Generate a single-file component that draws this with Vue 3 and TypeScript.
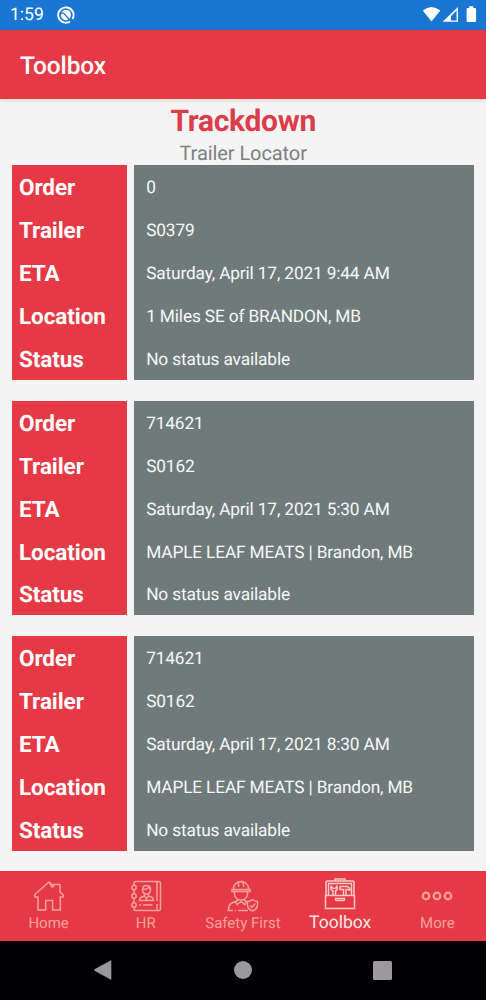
<script setup lang="ts">
interface Trailer {
  order: string
  trailer: string
  eta: string
  location: string
  status: string
}

const labels = ['Order', 'Trailer', 'ETA', 'Location', 'Status']

const trailers: Trailer[] = [
  { order: '0', trailer: 'S0379', eta: 'Saturday, April 17, 2021 9:44 AM', location: '1 Miles SE of BRANDON, MB', status: 'No status available' },
  { order: '714621', trailer: 'S0162', eta: 'Saturday, April 17, 2021 5:30 AM', location: 'MAPLE LEAF MEATS | Brandon, MB', status: 'No status available' },
  { order: '714621', trailer: 'S0162', eta: 'Saturday, April 17, 2021 8:30 AM', location: 'MAPLE LEAF MEATS | Brandon, MB', status: 'No status available' },
]
</script>

<template>
  <div class="screen">
    <div class="status-bar">
      <span class="clock">1:59</span>
      <svg class="app-mark" width="18" height="18" viewBox="0 0 18 18" fill="none" stroke="#fff">
        <path d="M13.100 15.500A7.700 7.700 0 1 1 15.500 13" stroke-width="1.900" />
        <path d="M4.400 6.800A5 5 0 0 1 13.900 9.500Q13.600 11.300 12.400 12.700L8.300 7.900Q6.200 6 4.400 6.800Z" fill="#fff" stroke="none" />
        <path d="M4 8.200Q5.600 6.900 7.500 9L11.300 13.500A5 5 0 0 1 4 8.200Z" fill="#fff" stroke="none" />
      </svg>
      <svg class="signals" width="56" height="18" viewBox="0 0 56 18" fill="#fff">
        <path d="M.8 4.5Q9.500-2.500 18.300 4.500L9.500 15.500Z" />
        <path d="M36 1V15.800H20.500ZM34.600 4.400L28.900 10.200V14.500H34.600Z" fill-rule="evenodd" />
        <path d="M47.200 1.900V.3H51.300V1.900H53Q54.100 1.900 54.100 3V14.800Q54.100 16 53 16H45.700Q44.600 16 44.600 14.800V3Q44.600 1.900 45.700 1.900Z" />
      </svg>
    </div>
    <header class="app-bar">Toolbox</header>
    <main class="content">
      <h1>Trackdown</h1>
      <h2>Trailer Locator</h2>
      <section v-for="(item, index) in trailers" :key="index" class="card">
        <div class="labels">
          <div v-for="label in labels" :key="label" class="cell">{{ label }}</div>
        </div>
        <div class="values">
          <div class="cell">{{ item.order }}</div>
          <div class="cell">{{ item.trailer }}</div>
          <div class="cell">{{ item.eta }}</div>
          <div class="cell">{{ item.location }}</div>
          <div class="cell">{{ item.status }}</div>
        </div>
      </section>
    </main>
    <nav class="tabs">
      <div class="tab">
        <svg width="32" height="32" viewBox="0 0 32 32">
          <path d="M5 17H2V14.300L16 2 20.700 6V4.500H27V12L30.200 14.900V17H27.300V30H19.600V20.500H12.700V30H5ZM16 2L18.800 7 20.700 6" />
        </svg>
        <span>Home</span>
      </div>
      <div class="tab">
        <svg width="32" height="32" viewBox="0 0 32 32">
          <path d="M4 5V3.500Q4 1.500 6 1.500H28.500Q30.500 1.500 30.500 3.500V28.500Q30.500 30.500 28.500 30.500H6Q4 30.500 4 28.500V27.500M4 10V13.500M4 18.500V22.500M27 2V21M27 24V30M9 25H11M13 25H22.500" />
          <circle cx="4" cy="7.500" r="2.200" /><circle cx="4" cy="16" r="2.200" /><circle cx="4" cy="25" r="2.200" />
          <path d="M12.500 9.500Q12.500 5.500 16.500 5.500T20.500 9.500Q20.500 14 16.500 14T12.500 9.500ZM12.700 9Q16 10 18.500 7.500L20.500 9.500M14.500 13.500V16L10.500 17.500 9.500 20.500H23.500L22.500 17.500 18.500 16V13.500M14.500 16L16.500 18.500 18.500 16M16.500 18.500V20.500" />
        </svg>
        <span>HR</span>
      </div>
      <div class="tab">
        <svg width="32" height="32" viewBox="0 0 32 32">
          <path d="M6.500 9.500V8.500A7.500 7 0 0 1 21.500 8.500V9.500M5 9.500H23V11.500H5ZM11.500 2.200V7M16.500 2.200V7M11.500 2H16.500M7.500 12V14A6.500 6 0 0 0 20.500 14V12M10.500 18.500V20.500L4 23.500Q1.500 25 1.500 30.500H6M8 30.500H9M11 30.500H21M17.500 18.500V20.500L21 22M8.500 21.500L10 24.500 14 21.500 18 24.500 19.500 21.500" />
          <path d="M25.500 19.500Q28 21.500 30.500 21.500V25Q30.500 29 25.500 31 20.500 29 20.500 25V21.500Q23.500 21.500 25.500 19.500ZM23 25.500L25 27.300 28.300 23.500" />
        </svg>
        <span>Safety First</span>
      </div>
      <div class="tab active">
        <svg width="32" height="32" viewBox="0 0 32 32">
          <path d="M2 18V4.500Q2 3 3.500 3H28.500Q30 3 30 4.500V18M4.500 18V5.500H27.500V18M11 3V1H21V3M1.500 17.500H30.500V30.500H1.500ZM11.500 20.500H20.500V21.500Q20.500 22.500 19.500 22.500H12.500Q11.500 22.500 11.500 21.500Z" />
          <path d="M9 17V13Q6 11.500 7.200 8.200L9.200 10.500H11.200L13 8.200Q14.200 11.500 11.500 13V17M19.500 17V11.500H16V8.500H22.500Q25.500 8.500 26 12L23.500 11.500H22V17" />
        </svg>
        <span>Toolbox</span>
      </div>
      <div class="tab">
        <svg width="32" height="32" viewBox="0 0 32 32" class="dots">
          <circle cx="5" cy="16" r="3.300" /><circle cx="16" cy="16" r="3.300" /><circle cx="27" cy="16" r="3.300" />
        </svg>
        <span>More</span>
      </div>
    </nav>
    <div class="system-nav">
      <svg width="18" height="20" viewBox="0 0 18 20"><path d="M17.300.8V19.200Q17.300 20 16.500 19.600L.5 10.700Q0 10 .5 9.300L16.500.4Q17.300 0 17.300.8Z" /></svg>
      <svg width="18" height="18" viewBox="0 0 18 18"><circle cx="9" cy="9" r="9" /></svg>
      <svg width="19" height="19" viewBox="0 0 19 19"><rect width="19" height="19" rx="1.500" /></svg>
    </div>
  </div>
</template>

<style>
body {
  margin: 0;
  background: #000;
}
</style>

<style scoped>
.screen {
  width: 486px;
  height: 1000px;
  display: flex;
  flex-direction: column;
  overflow: hidden;
  background: #f5f4f5;
  font-family: Roboto, sans-serif;
  text-rendering: geometricPrecision;
}

.status-bar {
  box-sizing: border-box;
  height: 29.7px;
  flex: none;
  display: flex;
  align-items: center;
  padding: 1px 8px 0 10px;
  background: #1976d2;
  color: #fff;
}

.clock {
  width: 47px;
  font-size: 17.5px;
  line-height: 24px;
}

.signals {
  margin-left: auto;
}

.app-bar {
  height: 69.3px;
  flex: none;
  padding-left: 20px;
  background: #e63946;
  color: #fff;
  font-size: 24.5px;
  font-weight: 500;
  letter-spacing: -0.15px;
  line-height: 72px;
  box-shadow: 0 1px 4px rgba(80, 60, 30, 0.2);
}

.content {
  flex: 1;
  min-height: 0;
  padding: 5px 12px 0 12.4px;
}

h1,
h2 {
  margin: 0;
  text-align: center;
}

h1 {
  height: 34px;
  color: #dc3d4a;
  font-size: 30px;
  font-weight: 700;
  letter-spacing: -0.3px;
  line-height: 35px;
}

h2 {
  height: 27.3px;
  color: #7b8080;
  font-size: 20px;
  font-weight: 400;
  letter-spacing: -0.08px;
  line-height: 31px;
}

.card {
  height: 214.6px;
  margin-bottom: 21px;
  display: grid;
  grid-template-columns: 114.2px 1fr;
  column-gap: 7.1px;
}

.labels,
.values {
  display: grid;
  grid-template-rows: repeat(5, 42.9px);
  color: #fff;
}

.labels {
  padding-left: 6.6px;
  background: #e63946;
  font-size: 22.5px;
  font-weight: 700;
  letter-spacing: -0.08px;
}

.values {
  padding-left: 12.5px;
  background: #6f7b7b;
  font-size: 17.3px;
  letter-spacing: -0.15px;
  color: #f5f8f8;
}

.cell {
  line-height: 46px;
  white-space: nowrap;
}

.tabs {
  height: 69.5px;
  flex: none;
  display: grid;
  grid-template-columns: repeat(5, 97.2px);
  background: #e63946;
}

.tab {
  display: flex;
  flex-direction: column;
  align-items: center;
  padding-top: 9px;
  color: #f5a09d;
  font-size: 15px;
  line-height: 22px;
}

.tab svg {
  fill: none;
  stroke: currentColor;
  stroke-width: 1.5;
}

.tab .dots {
  stroke-width: 2.2;
}

.tab.active {
  padding-top: 7px;
  color: #ffe9e8;
  font-size: 17.5px;
}

.tab.active span {
  line-height: 26px;
}

.tab.active svg {
  stroke: #fbc9c6;
}

.system-nav {
  height: 59.5px;
  flex: none;
  display: grid;
  grid-template-columns: repeat(3, 140px);
  justify-content: center;
  align-items: center;
  justify-items: center;
  padding-right: 1px;
  background: #010002;
  fill: #9b999b;
}
</style>
